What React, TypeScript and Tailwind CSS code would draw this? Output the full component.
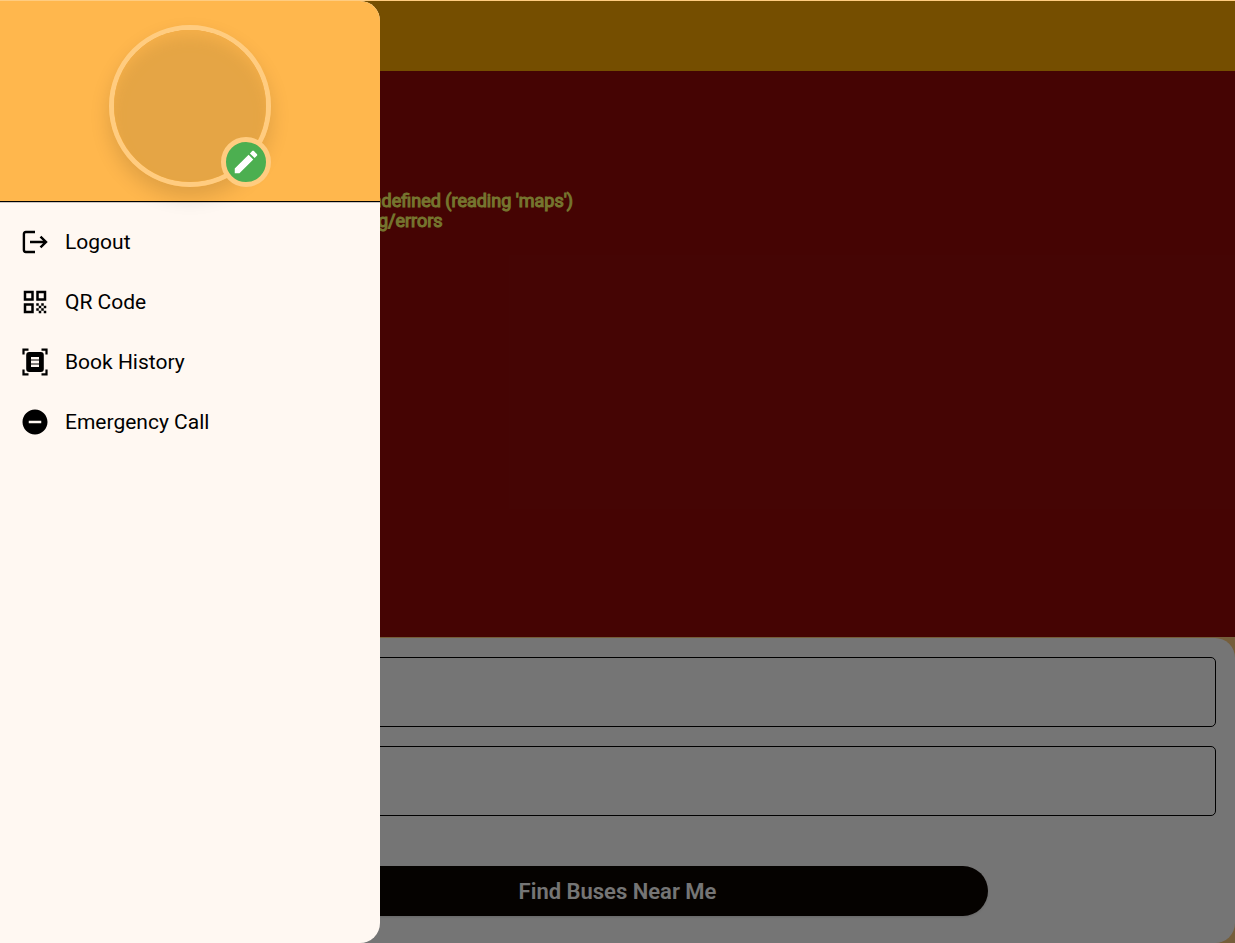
import type { ReactNode } from "react";

const menuItems: { label: string; icon: ReactNode }[] = [
  {
    label: "Logout",
    icon: (
      <svg viewBox="0 0 30 30" className="h-[30px] w-[30px]" fill="none" stroke="#000" strokeWidth="2.4" aria-hidden="true">
        <path d="M15 5H5.800Q3.900 5 3.900 6.900V23.100Q3.900 25 5.800 25H15" />
        <path d="M10 15H26M20.500 9.600L26 15L20.500 20.400" />
      </svg>
    ),
  },
  {
    label: "QR Code",
    icon: (
      <svg viewBox="0 0 24 24" className="h-[30px] w-[30px]" aria-hidden="true">
        <path d="M3 11h8V3H3v8zm2-6h4v4H5V5zM3 21h8v-8H3v8zm2-6h4v4H5v-4zM13 3v8h8V3h-8zm6 6h-4V5h4v4z" />
        <path d="M19 19h2v2h-2zM13 13h2v2h-2zM15 15h2v2h-2zM13 17h2v2h-2zM15 19h2v2h-2zM17 17h2v2h-2zM17 13h2v2h-2zM19 15h2v2h-2z" />
      </svg>
    ),
  },
  {
    label: "Book History",
    icon: (
      <svg viewBox="0 0 30 30" className="h-[30px] w-[30px]" aria-hidden="true">
        <path d="M3.500 7.500V2.600H8.500M21.500 2.600H26.500V7.500M26.500 22.500V27.400H21.500M8.500 27.400H3.500V22.500" fill="none" stroke="#000" strokeWidth="2.200" />
        <rect x="6.200" y="5" width="17.600" height="20" rx="3" />
        <path d="M11 10H19V12.600H11zM11 13.600H19V16.400H11zM11 17.400H19V20H11z" fill="#fff8f2" />
      </svg>
    ),
  },
  {
    label: "Emergency Call",
    icon: (
      <svg viewBox="0 0 24 24" className="h-[30px] w-[30px]" aria-hidden="true">
        <path d="M12 2C6.480 2 2 6.480 2 12s4.480 10 10 10 10-4.480 10-10S17.520 2 12 2zm5 11H7v-2h10v2z" />
      </svg>
    ),
  },
];

function BookingPage() {
  return (
    <div className="flex min-h-screen flex-col bg-[#ffcc80] pt-px">
      <header className="h-[70px] shrink-0 bg-[#ffab00]" />
      <section className="flex-1 bg-[#960a08] px-[67px] pt-[120px] text-[18px] leading-[20px] text-[#ffff66] [-webkit-text-stroke:1px_#ffff66]">
        <p>TypeError: Cannot read properties of undefined (reading 'maps')</p>
        <p>See also: https://docs.flutter.dev/testing/errors</p>
      </section>
      <form className="mt-px flex shrink-0 flex-col items-center rounded-[20px] bg-white px-[19px] pt-[19px] pb-[27px]">
        <input aria-label="From" className="h-[70px] w-full rounded-[5px] border border-black bg-white px-4" />
        <input aria-label="To" className="mt-[19px] h-[70px] w-full rounded-[5px] border border-black bg-white px-4" />
        <button type="button" className="mt-[50px] h-[50px] w-[60vw] rounded-full bg-[#0d0500] text-[22px] font-semibold text-white shadow-sm">
          Find Buses Near Me
        </button>
      </form>
    </div>
  );
}

function Drawer() {
  return (
    <aside className="absolute top-px bottom-0 left-0 w-[380px] overflow-hidden rounded-r-[20px] bg-[#fff8f2]">
      <div className="flex h-[201px] justify-center border-b border-black bg-[#ffb74d] pt-6 shadow-[0_1px_0_rgba(0,0,0,0.2)]">
        <div className="relative h-[162px] w-[162px] rounded-full border-[5px] border-[#ffcc80] shadow-[0_10px_20px_rgba(0,0,0,0.13)]">
          <div className="h-full w-full rounded-full bg-[#e5a545] shadow-[inset_0_10px_14px_-4px_#f6b04a]" />
          <button type="button" aria-label="Edit photo" className="absolute -right-[5px] -bottom-[5px] flex h-[50px] w-[50px] items-center justify-center rounded-full border-[5px] border-[#ffcc80] bg-[#4caf50]">
            <svg viewBox="0 0 24 24" className="h-[30px] w-[30px] shrink-0" fill="#fff" aria-hidden="true">
              <path d="M3 17.250V21h3.750L17.810 9.940l-3.750-3.750L3 17.250zM20.710 7.040c.39-.39.39-1.020 0-1.410l-2.340-2.340c-.39-.39-1.020-.39-1.410 0l-1.830 1.830 3.750 3.750 1.830-1.830z" />
            </svg>
          </button>
        </div>
      </div>
      <nav className="pt-[10px]">
        {menuItems.map((item) => (
          <a key={item.label} href="#" className="flex h-[60px] items-center gap-[15px] px-5 text-[21px] leading-[24px] text-black">
            {item.icon}
            {item.label}
          </a>
        ))}
      </nav>
    </aside>
  );
}

export default function App() {
  return (
    <main className="relative min-h-screen bg-[#ffcc80] font-[Roboto,sans-serif]">
      <BookingPage />
      <div className="absolute inset-x-0 top-px bottom-0 bg-black/54" />
      <Drawer />
    </main>
  );
}
